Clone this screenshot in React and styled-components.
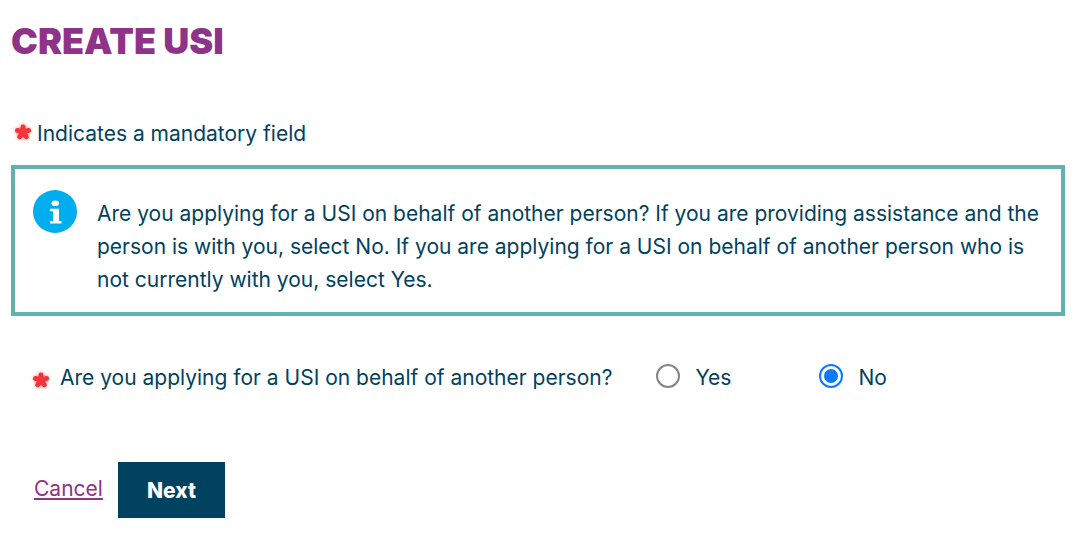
import React, { useState } from "react";
import styled, { createGlobalStyle } from "styled-components";

const navy = "#00425f";
const purple = "#8f3389";
const teal = "#61b1ad";
const blue = "#0a7aff";

const GlobalStyle = createGlobalStyle`
  body {
    margin: 0;
    background-color: white;
    color: ${navy};
    font-family: Inter, "Liberation Sans", sans-serif;
    font-size: 21px;
    line-height: 33px;
  }
`;

const Page = styled.main`
  display: flex;
  flex-direction: column;
  padding: 20px 15px 20px 11px;
`;

const Title = styled.h1`
  margin: 0;
  color: ${purple};
  font-size: 36px;
  font-weight: 900;
  line-height: 43px;
  text-transform: uppercase;
`;

const Legend = styled.p`
  display: flex;
  align-items: flex-start;
  gap: 4px;
  margin: 54px 0 15px;
  padding-left: 2px;
`;

const Info = styled.section`
  display: flex;
  align-items: flex-start;
  gap: 20px;
  padding: 21px 18px 16px;
  border: 4px solid ${teal};
`;

const InfoText = styled.p`
  margin: 7px 0 0;
`;

const InfoSvg = styled.svg`
  flex: none;
  width: 44px;
  height: 44px;
`;

const StarSvg = styled.svg`
  flex: none;
  width: 20px;
  height: 20px;
  margin-top: ${props => props.$top}px;
`;

const Question = styled.div`
  display: flex;
  align-items: flex-start;
  margin-top: 45px;
  padding-left: 20px;
`;

const QuestionText = styled.div`
  display: flex;
  align-items: flex-start;
  gap: 9px;
  margin-right: 44px;
`;

const Choices = styled.div`
  display: flex;
  gap: 88px;
`;

const Choice = styled.label`
  display: flex;
  align-items: flex-start;
  gap: 15px;
`;

const Radio = styled.input`
  appearance: none;
  box-sizing: border-box;
  width: 24px;
  height: 24px;
  margin: 3px 0 0;
  padding: 3px;
  border: 2px solid #858585;
  border-radius: 50%;
  background-clip: content-box;

  &:checked {
    border-color: ${blue};
    background-color: ${blue};
  }
`;

const Actions = styled.div`
  display: flex;
  align-items: flex-start;
  gap: 15px;
  margin-top: 68px;
  padding-left: 23px;
`;

const Cancel = styled.a`
  padding-top: 10px;
  color: ${purple};
  text-decoration: underline;
`;

const Next = styled.button`
  padding: 12px 29px 11px;
  border: 0;
  background-color: ${navy};
  color: white;
  font: inherit;
  font-weight: 800;
`;

const Star = ({ top }) => (
  <StarSvg $top={top} viewBox="0 0 20 20" aria-hidden="true">
    <defs>
      <filter id="glow" x="-50%" y="-50%" width="200%" height="200%">
        <feGaussianBlur stdDeviation="1.4" />
      </filter>
    </defs>
    <g stroke="#ff8f8f" strokeWidth="6" strokeLinecap="round" filter="url(#glow)">
      <path d="M10 10V5M10 10L5 8.5M10 10L15 8.5M10 10L7 14.5M10 10L13 14.5" />
    </g>
    <g stroke="#f0353b" strokeWidth="4.8" strokeLinecap="round">
      <path d="M10 10V5M10 10L4.4 8.4M10 10L15.6 8.4M10 10L6.6 14.8M10 10L13.4 14.8" />
    </g>
  </StarSvg>
);

const InfoIcon = () => (
  <InfoSvg viewBox="0 0 44 44" aria-hidden="true">
    <ellipse cx="22" cy="21.5" rx="22" ry="21.5" fill="#00aeef" />
    <ellipse cx="22.3" cy="13.2" rx="3.8" ry="2.8" fill="white" />
    <path d="M17 18.8H26V31H28.5V33.5H17V31H20V21.3H17Z" fill="white" />
  </InfoSvg>
);

export default function App() {
  const [behalf, setBehalf] = useState("no");

  return (
    <>
      <GlobalStyle />
      <Page>
        <Title>Create USI</Title>
        <Legend>
          <Star top={5} />
          Indicates a mandatory field
        </Legend>
        <Info>
          <InfoIcon />
          <InfoText>
            Are you applying for a USI on behalf of another person? If you are
            providing assistance and the person is with you, select No. If you
            are applying for a USI on behalf of another person who is not
            currently with you, select Yes.
          </InfoText>
        </Info>
        <Question role="radiogroup" aria-labelledby="behalf-label">
          <QuestionText>
            <Star top={9} />
            <span id="behalf-label">
              Are you applying for a USI on behalf of another person?
            </span>
          </QuestionText>
          <Choices>
            <Choice>
              <Radio
                type="radio"
                name="behalf"
                checked={behalf === "yes"}
                onChange={() => setBehalf("yes")}
              />
              Yes
            </Choice>
            <Choice>
              <Radio
                type="radio"
                name="behalf"
                checked={behalf === "no"}
                onChange={() => setBehalf("no")}
              />
              No
            </Choice>
          </Choices>
        </Question>
        <Actions>
          <Cancel href="#cancel">Cancel</Cancel>
          <Next type="button">Next</Next>
        </Actions>
      </Page>
    </>
  );
}
